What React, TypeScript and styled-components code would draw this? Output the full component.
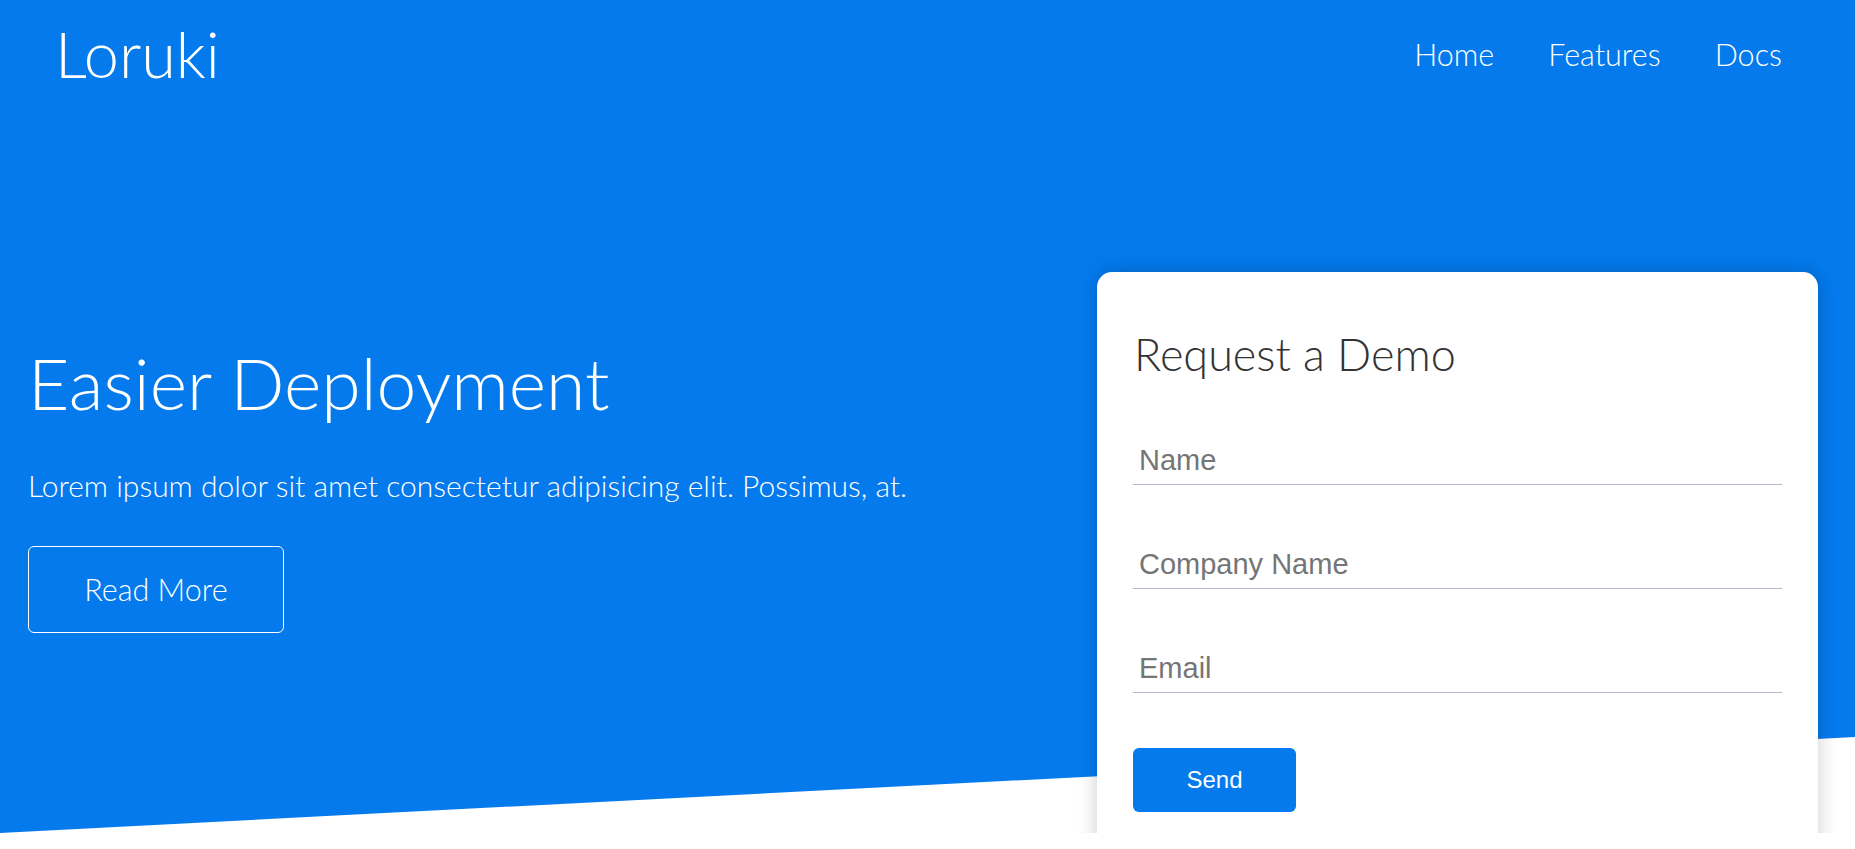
import React from "react";
import styled, { createGlobalStyle } from "styled-components";

const GlobalStyle = createGlobalStyle`
  * { box-sizing: border-box; margin: 0; padding: 0; }
  html, body { overflow: hidden; }
  body {
    margin: 0;
    font-family: Lato, "Open Sans", sans-serif;
    font-weight: 300;
    background: #fff;
    color: #333;
  }
  ::-webkit-scrollbar { display: none; }
`;

const BLUE = "#047aed";

const Hero = styled.header`
  position: relative;
  height: 833px;
  color: #fff;
  &::before {
    content: "";
    position: absolute;
    inset: 0;
    background: ${BLUE};
    clip-path: polygon(0 0, 100% 0, 100% 737px, 0 100%);
    z-index: 0;
  }
`;

const Navbar = styled.nav`
  position: relative;
  z-index: 1;
  height: 108px;
  display: flex;
  align-items: center;
  justify-content: space-between;
  padding: 0 73px 0 55px;
`;

const Logo = styled.h1`
  font-family: Lato, sans-serif;
  font-weight: 300;
  font-size: 63px;
  line-height: 1.2;
`;

const NavList = styled.ul`
  list-style: none;
  display: flex;
  gap: 54px;
  margin-top: 1px;
`;

const NavLink = styled.a`
  color: #fff;
  text-decoration: none;
  font-family: Lato, sans-serif;
  font-weight: 300;
  font-size: 30.5px;
  line-height: 1.2;
`;

const Showcase = styled.section`
  position: relative;
  z-index: 1;
  display: grid;
  grid-template-columns: 1fr 721px;
  column-gap: 40px;
  align-items: start;
  padding: 164px 37px 0 28px;
`;

const Intro = styled.div`
  padding-top: 69px;
`;

const Headline = styled.h2`
  font-family: Lato, sans-serif;
  font-weight: 300;
  font-size: 71.5px;
  line-height: 1.2;
  margin-top: -1px;
`;

const Lead = styled.p`
  margin-top: 41px;
  font-family: Lato, sans-serif;
  font-weight: 300;
  font-size: 30px;
  line-height: 1.2;
`;

const OutlineButton = styled.a`
  margin-top: 43px;
  display: inline-flex;
  align-items: center;
  justify-content: center;
  width: 256px;
  height: 87px;
  border: 1px solid #fff;
  border-radius: 6px;
  color: #fff;
  text-decoration: none;
  font-family: Lato, sans-serif;
  font-weight: 300;
  font-size: 30.5px;
`;

const Card = styled.div`
  background: #fff;
  border-radius: 15px;
  box-shadow: 0 0 20px rgba(0, 0, 0, 0.2);
  padding: 56px 36px 60px 36px;
  display: flex;
  flex-direction: column;
  gap: 55px;
  color: #333;
`;

const CardTitle = styled.h2`
  font-family: Lato, sans-serif;
  font-weight: 300;
  font-size: 45px;
  line-height: 1.2;
  margin-top: -1px;
  padding-left: 1px;
`;

const Field = styled.input`
  display: block;
  width: 100%;
  border: none;
  border-bottom: 1px solid #b3bcc8;
  padding: 8px 5px 7px 6px;
  font-family: "Liberation Sans", Arial, sans-serif;
  font-size: 29px;
  font-weight: 400;
  color: #333;
  outline: none;
  background: transparent;
  &::placeholder { color: #757575; }
`;

const SendButton = styled.button`
  width: 163px;
  height: 64px;
  border: none;
  border-radius: 6px;
  background: ${BLUE};
  color: #fff;
  font-family: "Liberation Sans", Arial, sans-serif;
  font-size: 24px;
  cursor: pointer;
`;

export default function App() {
  return (
    <>
      <GlobalStyle />
      <Hero>
        <Navbar>
          <Logo>Loruki</Logo>
          <NavList>
            <li><NavLink href="#">Home</NavLink></li>
            <li><NavLink href="#">Features</NavLink></li>
            <li><NavLink href="#">Docs</NavLink></li>
          </NavList>
        </Navbar>
        <Showcase>
          <Intro>
            <Headline>Easier Deployment</Headline>
            <Lead>Lorem ipsum dolor sit amet consectetur adipisicing elit. Possimus, at.</Lead>
            <OutlineButton href="#">Read More</OutlineButton>
          </Intro>
          <Card>
            <CardTitle>Request a Demo</CardTitle>
            <Field type="text" placeholder="Name" />
            <Field type="text" placeholder="Company Name" />
            <Field type="email" placeholder="Email" />
            <div>
              <SendButton>Send</SendButton>
            </div>
          </Card>
        </Showcase>
      </Hero>
    </>
  );
}
